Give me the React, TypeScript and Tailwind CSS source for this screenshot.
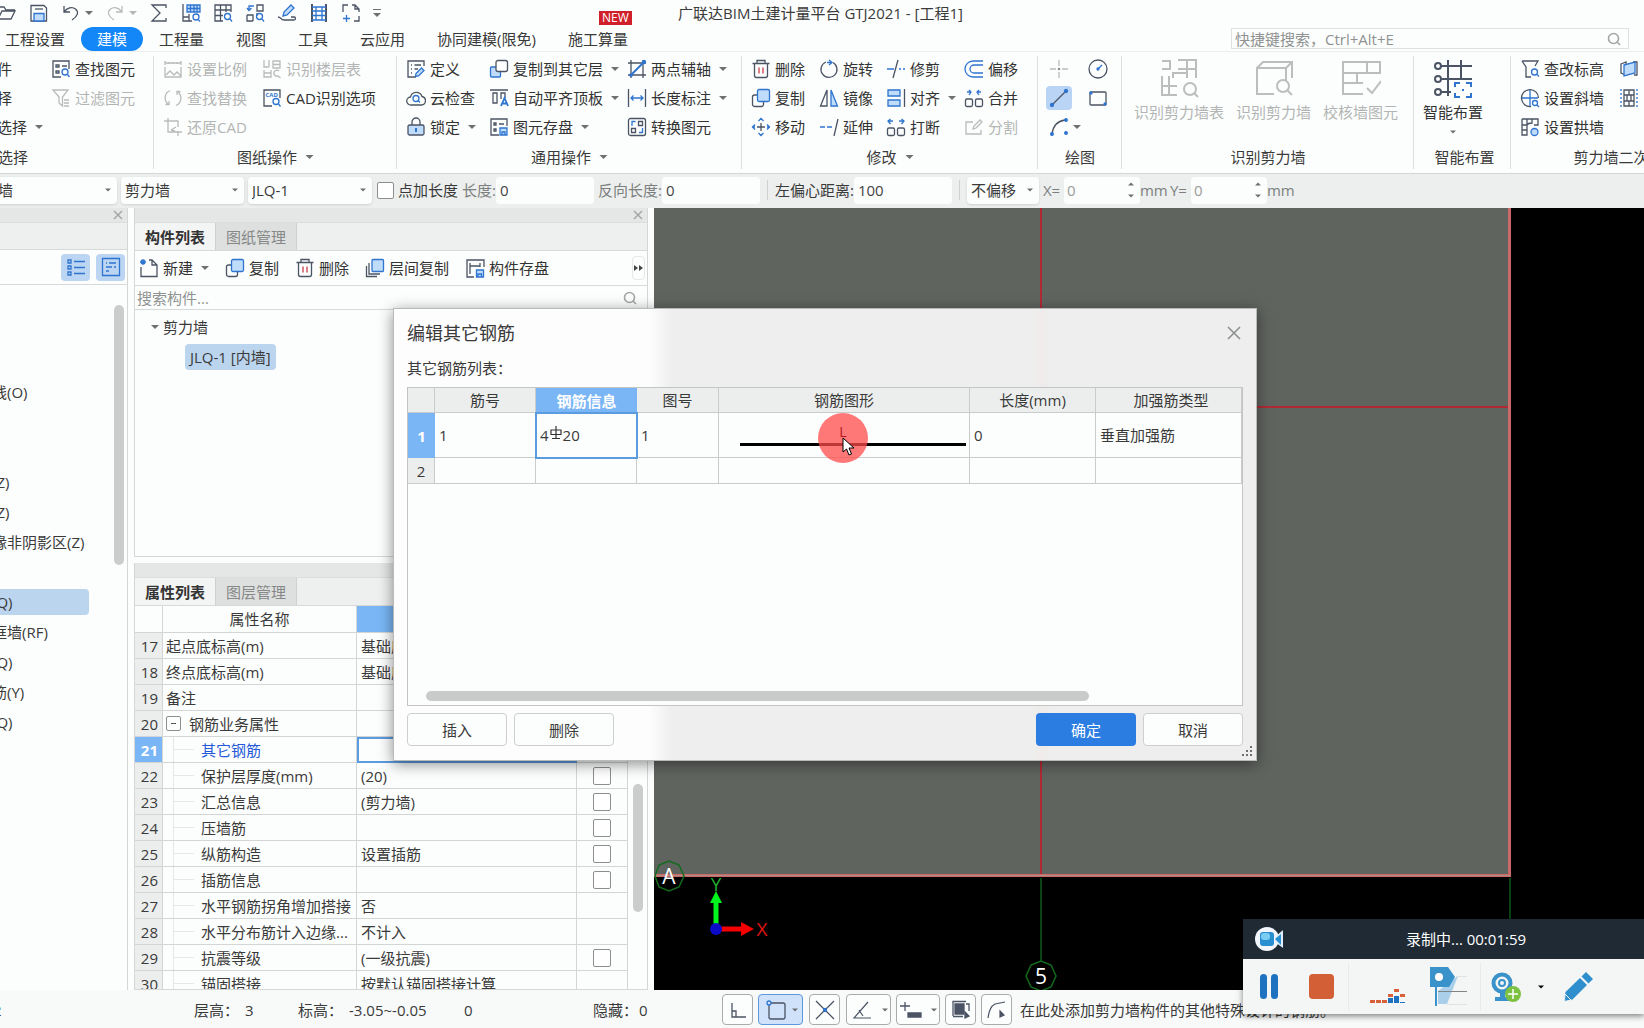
import type { ReactNode } from 'react';
import clsx from 'clsx';

const D = '#4b5464';
const B = '#2f74cf';
const L = '#bfdcfb';
const G = '#b9bbba';

// 20x20 line icons
const ICONS: Record<string, ReactNode> = {
  folder: (
    <path d="M1 16V4h6l2 3h9M1 16h13l4-8H5L1 16" stroke={D} />
  ),
  save: (
    <>
      <path d="M2 2.500h13l2.500 2.500v13H2z" stroke={D} />
      <path d="M5 10.500h10V18H5z" fill={L} stroke={B} />
      <path d="M6 6h8" stroke={D} />
    </>
  ),
  undo: <path d="M3 3v6h6M3 9C6 5 11 3 14.500 6s2.500 7-3.500 11" stroke={D} />,
  redo: <path d="M17 3v6h-6M17 9C14 5 9 3 5.500 6S3 13 9 17" stroke={G} />,
  sigma: <path d="M17 5V2H3l8 8-8 8h14v-3" stroke={D} />,
  tableFind: (
    <>
      <path d="M2 1v17h9M2 14h6V11M8 14v4" stroke={D} />
      <path d="M6 2h13v7H6zM6 5.500h13M9.500 2v7M13 2v7M16 2v7" stroke={B} fill={L} />
      <circle cx="15" cy="14" r="3" stroke={B} />
      <path d="M17 16.500l2 2" stroke={B} />
    </>
  ),
  gridFind: (
    <>
      <path d="M18 9V2H2v16h8M2 7h16M2 12.500h8M7.500 2v16M13 2v7" stroke={D} />
      <circle cx="14.500" cy="13.500" r="3" stroke={B} />
      <path d="M17 16l2 2.500" stroke={B} />
    </>
  ),
  swapFind: (
    <>
      <path d="M12 2h6v6h-6zM2 12v6h6M2 12h6v6M12 10v3" stroke={D} />
      <path d="M9 3H4v4M2 5l2 2.500L6.500 5" stroke={B} />
      <circle cx="14.500" cy="13.500" r="3" stroke={B} />
      <path d="M17 16l2 2.500" stroke={B} />
    </>
  ),
  eraser: (
    <>
      <path d="M1 14c3 0 3 3 6 3h10c2 0 2-3 0-3h-3" stroke={D} />
      <path d="M6 13l1-4 7-7 3 3-7 7z" stroke={B} fill={L} />
    </>
  ),
  film: (
    <>
      <path d="M3 1v18M17 1v18" stroke={D} strokeWidth="2" />
      <path d="M3 4h14M3 8h14M3 12.500h14M3 17h14M7 4v13M13 4v13" stroke={B} />
    </>
  ),
  exportBox: (
    <>
      <path d="M2 9V2h5M11 2h3l4 4v3M18 13v5h-5M14 2v4h4" stroke={D} />
      <path d="M5.500 12v7M2 15.500h7" stroke={B} />
    </>
  ),
  findElement: (
    <>
      <path d="M18 10V2H2v16h8M5 6h3v2H5zM5 12h3v2H5zM11 7h5" stroke={D} />
      <circle cx="14" cy="13" r="3" stroke={B} />
      <path d="M16.500 15.500l2 2.500" stroke={B} />
    </>
  ),
  filter: <path d="M2 2h15l-5.500 7v9l-3.500-3V9zM13 12h5M13 15h5M13 18h5" stroke={G} />,
  scale: <path d="M2 4h16M2 2v4M6 3v2M10 3v2M14 3v2M18 2v4M2 8v10h16V8M3 16l4-4 4 4 3-3 4 4" stroke={G} />,
  findSwap: <path d="M7 2.500A8 8 0 0 0 5 16M2.500 16.500H6V13M13 17.500A8 8 0 0 0 15 4M17.500 3.500H14V7" stroke={G} />,
  restore: <path d="M5 1v14h14M1 4h14v6M15 14v5M8 13l5-3M8 13l4 1" stroke={G} />,
  floorTable: (
    <path d="M2 1v7h5M7 1v7M11 2h7v7h-7zM11 5.500h7M2 11v7h7v-7M2 14h7M17 12a3 3 0 1 0-1 5l2.500 2" stroke={G} />
  ),
  cad: (
    <>
      <path d="M18 10V2H2v16h8" stroke={D} />
      <text x="3.500" y="9" fontSize="6" fontWeight="700" fill={B} stroke="none">CAD</text>
      <circle cx="14" cy="13.500" r="3" stroke={B} />
      <path d="M16.500 16l2 2.500" stroke={B} />
    </>
  ),
  define: (
    <>
      <path d="M18 7V2H2v16h8M5 6h1M8.500 6H15M5 10h1M8.500 10H12M5 14h1" stroke={D} />
      <path d="M9.500 17.500l.500-3L15.500 9l2.500 2.500-5.500 5.500z" stroke={B} fill={L} />
    </>
  ),
  cloud: (
    <>
      <path d="M5 17a4 4 0 0 1-.500-8A6 6 0 0 1 16 8.500 4.300 4.300 0 0 1 15.500 17z" stroke={D} />
      <circle cx="10" cy="10.500" r="3" stroke={B} />
      <path d="M12 12.500l2 2" stroke={B} />
    </>
  ),
  lock: (
    <>
      <path d="M6 8V5a4 4 0 0 1 8 0v3" stroke={D} />
      <rect x="2" y="8" width="16" height="10" rx="1.500" stroke={D} fill={L} />
      <path d="M10 11v4" stroke={B} strokeWidth="2" />
    </>
  ),
  copyFloor: (
    <>
      <rect x="1.500" y="8" width="10" height="10" rx="1" stroke={B} fill={L} />
      <rect x="7" y="1.500" width="11.500" height="11" rx="2" stroke={D} fill="#fff" />
    </>
  ),
  alignTop: (
    <>
      <path d="M1 2h18M4 5h4v10H4zM12 11V5h4v5" stroke={D} />
      <path d="M12 18l3.500-8 3.500 8M13 15.500h5" stroke={B} strokeWidth="1.800" />
    </>
  ),
  storeElement: (
    <>
      <path d="M18 9V2H2v16h8M5 6h2v2H5zM10 7h5M5 12h2v2H5z" stroke={D} />
      <path d="M11 11h7v7h-7zM13 18v-3h3v3" stroke={B} fill={L} />
    </>
  ),
  axis: (
    <>
      <path d="M4 1v18M16 1v18M1 4h18M1 16h18" stroke={D} />
      <path d="M4 16L16 4" stroke={B} strokeWidth="2" />
      <circle cx="4" cy="16" r="1.200" fill={B} stroke={B} />
      <circle cx="17" cy="3" r="1.500" fill={B} stroke={B} />
    </>
  ),
  dimension: (
    <>
      <path d="M1.500 1v18M18.500 1v18" stroke={D} />
      <path d="M4 10h12M6.500 7.500L4 10l2.500 2.500M13.500 7.500L16 10l-2.500 2.500" stroke={B} />
    </>
  ),
  convert: (
    <>
      <rect x="1.500" y="1.500" width="17" height="17" rx="2" stroke={D} />
      <path d="M11.500 4.500h4v4h-4zM4.500 11.500h4v4h-4z" stroke={D} />
      <path d="M8.500 4.500H5V9M12 15.500h3.500V11" stroke={B} />
    </>
  ),
  trash: (
    <>
      <path d="M1.500 4.500h17M6 4V1.500h8V4M3.500 5v11.500a2 2 0 0 0 2 2h9a2 2 0 0 0 2-2V5" stroke={D} />
      <path d="M8 8.500v6M12 8.500v6" stroke="#cf3b4c" />
    </>
  ),
  copy: (
    <>
      <rect x="1.500" y="7" width="11" height="11.500" rx="2" stroke={D} />
      <rect x="6.500" y="1.500" width="12" height="12" rx="1.500" stroke={B} fill={L} />
    </>
  ),
  move: (
    <>
      <path d="M10 6v8M6 10h8" stroke={D} />
      <path d="M10 1v2M10 17v2M1 10h3M16 10h3M7.500 4L10 1.500 12.500 4M7.500 16l2.500 2.500 2.500-2.500M4 7.500L1.500 10 4 12.500M16 7.500l2.500 2.500-2.500 2.500" stroke={B} />
    </>
  ),
  rotate: (
    <>
      <path d="M7 3a8 8 0 1 0 7 .500" stroke={D} />
      <path d="M8 3.500h4.500M10 1l3 2.500L10 6" stroke={B} />
    </>
  ),
  mirror: (
    <>
      <path d="M8 2v16H1.500z" stroke={D} />
      <path d="M12 2v16h6.500z" stroke={B} fill={L} />
    </>
  ),
  extend: (
    <>
      <path d="M1 10h5M8 10h5" stroke={B} />
      <path d="M19 2l-4 17" stroke={D} />
    </>
  ),
  trim: (
    <>
      <path d="M1 10h7M13 10h2M17 10h2" stroke={B} />
      <path d="M12 1L7 19" stroke={D} />
    </>
  ),
  align: (
    <>
      <path d="M2 2h12v6H2zM2 12h12v6H2z" stroke={B} fill={L} />
      <path d="M18.500 1v18" stroke={D} />
    </>
  ),
  breakUp: (
    <>
      <rect x="1.500" y="11" width="7" height="7.500" rx="1.500" stroke={D} />
      <rect x="11.500" y="11" width="7" height="7.500" rx="1.500" stroke={D} />
      <path d="M2 4h5M4.500 2L2 4l2.500 3M13 4h5M15.500 2L18 4l-2.500 3" stroke={B} />
    </>
  ),
  offset: <path d="M19 2H9a7.800 7.800 0 0 0 0 16h10M19 6H10a4 4 0 0 0 0 8h9" stroke={B} />,
  merge: (
    <>
      <rect x="1.500" y="11" width="7" height="7.500" rx="1.500" stroke={D} />
      <rect x="11.500" y="11" width="7" height="7.500" rx="1.500" stroke={D} />
      <path d="M3 4h4M5 2l2 2-2 3M17 4h-4M15 2l-2 2 2 3" stroke={B} />
    </>
  ),
  split: <path d="M9 5H2v12h15v-4M9 12l1-3 6-6 2 2-6 6z" stroke={G} />,
  point: (
    <>
      <path d="M10 1v6M10 13v6M1 10h6M13 10h6" stroke={G} />
      <path d="M9.500 9.500h1v1h-1z" stroke="#8d9090" />
    </>
  ),
  circle: (
    <>
      <circle cx="10" cy="10" r="9" stroke={D} />
      <path d="M10 10l4-4" stroke={B} />
      <circle cx="10" cy="10" r="1" fill={B} stroke={B} />
    </>
  ),
  line: (
    <>
      <path d="M3 17L17 3" stroke={D} />
      <circle cx="3" cy="17" r="1.500" fill={B} stroke={B} />
      <circle cx="17" cy="3" r="1.500" fill={B} stroke={B} />
    </>
  ),
  rect: (
    <>
      <rect x="2" y="4" width="16" height="13" rx="1" stroke={D} />
      <circle cx="3" cy="5" r="1" fill={B} stroke={B} />
      <circle cx="17" cy="16" r="1" fill={B} stroke={B} />
    </>
  ),
  arc: (
    <>
      <path d="M3 17C4 9 9 4 16 3" stroke={D} />
      <circle cx="3" cy="17" r="1.300" fill={B} stroke={B} />
      <circle cx="17" cy="3" r="1.300" fill={B} stroke={B} />
      <circle cx="17" cy="16" r="1.300" fill={B} stroke={B} />
    </>
  ),
  elevation: (
    <>
      <path d="M2 2h16l-3 5M2 2l4 6v10h5" stroke={D} />
      <circle cx="14.500" cy="13" r="3" stroke={B} />
      <path d="M17 15.500l2 2" stroke={B} />
    </>
  ),
  slant: (
    <>
      <path d="M11 18.500A8.500 8.500 0 1 1 18.500 10" stroke={D} />
      <path d="M10 2v16M2 10h16" stroke={B} />
      <circle cx="15" cy="15" r="2.500" stroke={B} fill="#fff" />
      <path d="M17 17l2 2" stroke={B} />
    </>
  ),
  arch: (
    <>
      <path d="M2 2h16v6h-4M2 2v16h5V8c1-2 3-2 5-2V2M2 8h5M2 13h5M7 2v6" stroke={D} />
      <circle cx="14.500" cy="15" r="3.500" stroke={B} fill={L} />
    </>
  ),
  layers: (
    <>
      <path d="M2 5l5-2v13l-5-2zM14 3h4v13h-3" stroke={D} />
      <path d="M5 6l11-3v11L5 17z" stroke={B} fill={L} />
    </>
  ),
  grout: (
    <>
      <path d="M2 1v18M18 1v18" stroke={B} strokeDasharray="2 2" />
      <path d="M5 2h10v16H5zM5 7h10M5 13h10M10 2v5M8 7v6M12 7v6M10 13v5" stroke={D} />
    </>
  ),
  newFile: (
    <>
      <path d="M2 9v9.500h16V7l-5-5h-3M13 2v5h5" stroke={D} />
      <path d="M4 1v6M1 4h6M2 2l4 4M6 2L2 6" stroke={B} />
    </>
  ),
  layerCopy: (
    <>
      <path d="M1.500 8v10.500H12M4 5v11h11" stroke={D} />
      <rect x="7" y="1.500" width="11.500" height="12" rx="1" stroke={B} fill={L} />
    </>
  ),
  storeMember: (
    <>
      <path d="M19 9V2H2v17h7M5 5v11M5 8h10M15 5v4" stroke={D} />
      <path d="M11.500 12h7v7h-7zM13 19v-3h3.500v3" stroke={B} fill={L} />
    </>
  ),
  list: (
    <path d="M2 3h3v3H2zM2 9h3v3H2zM2 15h3v3H2zM8 4.500h11M8 10.500h11M8 16.500h11" stroke={B} />
  ),
  card: <path d="M1.500 1.500h17v17h-17zM5 6h1M8 6h7M5 10h6M13 10h2M5 14h3" stroke={B} />,
};

function Icon({ name, className = 'size-5' }: { name: string; className?: string }) {
  return (
    <svg viewBox="0 0 20 20" fill="none" strokeWidth="1.300" className={clsx('shrink-0', className)} aria-hidden>
      {ICONS[name]}
    </svg>
  );
}

function Caret({ className = '' }: { className?: string }) {
  return (
    <svg viewBox="0 0 8 4" className={clsx('h-1 w-2 shrink-0 fill-[#6d7071]', className)} aria-hidden>
      <path d="M0 0h8L4 4z" />
    </svg>
  );
}

interface ToolProps {
  icon?: string;
  label: string;
  caret?: boolean;
  off?: boolean;
}

function Tool({ icon, label, caret, off }: ToolProps) {
  return (
    <button
      disabled={off}
      className={clsx('flex items-center gap-1 whitespace-nowrap', off ? 'text-[#b3b5b4]' : 'text-[#333]')}
    >
      {icon && <Icon name={icon} />}
      <span>{label}</span>
      {caret && <Caret className="ml-1" />}
    </button>
  );
}

interface GroupProps {
  title: string;
  caret?: boolean;
  className?: string;
  titleClass?: string;
  children: ReactNode;
}

function Group({ title, caret, className, titleClass, children }: GroupProps) {
  return (
    <section className={clsx('relative flex shrink-0 flex-col pt-[2px]', className)}>
      <div className="flex h-[87px]">{children}</div>
      <div className={clsx('flex h-[31px] items-center justify-center gap-2 whitespace-nowrap', titleClass)}>
        {title}
        {caret && <Caret className="w-[9px]" />}
      </div>
      <i className="absolute top-1 right-0 bottom-1 w-px bg-[#dddfde]" />
    </section>
  );
}

const GRID = 'grid grid-flow-col grid-rows-[repeat(3,29px)]';

function TitleBar() {
  return (
    <header className="shrink-0">
      <div className="flex h-[25px] items-center">
        <div className="-ml-[3px] flex flex-1 items-center gap-3">
          <Icon name="folder" />
          <Icon name="save" />
          <span className="flex items-center gap-1">
            <Icon name="undo" />
            <Caret />
          </span>
          <span className="flex items-center gap-1">
            <Icon name="redo" />
            <Caret className="opacity-50" />
          </span>
          {['sigma', 'tableFind', 'gridFind', 'swapFind', 'eraser', 'film', 'exportBox'].map((n) => (
            <Icon key={n} name={n} />
          ))}
          <span className="flex flex-col items-center gap-[3px]">
            <i className="h-px w-2 bg-[#6d7071]" />
            <Caret />
          </span>
        </div>
        <h1>广联达BIM土建计量平台 GTJ2021 - [工程1]</h1>
        <div className="flex-1" />
      </div>
      <nav className="flex h-[26px] items-end">
        <div className="-ml-[11px] flex flex-1">
          {['工程设置', '建模', '工程量', '视图', '工具', '云应用', '协同建模(限免)', '施工算量'].map((m) => (
            <button
              key={m}
              className={clsx(
                'relative h-6 rounded-full px-4 whitespace-nowrap',
                m === '建模' && 'bg-[#1487f8] text-white',
              )}
            >
              {m}
              {m === '施工算量' && (
                <span className="absolute -top-4 right-3 h-[14px] w-[33px] bg-[#d0212b] text-xs leading-[14px] text-white">
                  NEW
                </span>
              )}
            </button>
          ))}
        </div>
        <label className="mr-[15px] mb-[2px] flex h-[21px] w-[398px] items-center border border-[#dfe1e0] px-[3px]">
          <input
            aria-label="快捷键搜索"
            placeholder="快捷键搜索，Ctrl+Alt+E"
            className="min-w-0 flex-1 outline-none placeholder:text-[#8f9291]"
          />
          <SearchIcon />
        </label>
      </nav>
    </header>
  );
}

function SearchIcon() {
  return (
    <svg viewBox="0 0 14 14" fill="none" className="mr-1 size-[14px] shrink-0 stroke-[#a3a6a5]" strokeWidth="1.600">
      <circle cx="6.500" cy="6.500" r="5" />
      <path d="M10 10l3 3" />
    </svg>
  );
}

function BigTool({ label, off, children }: { label: string; off?: boolean; children: ReactNode }) {
  return (
    <button
      disabled={off}
      className={clsx('flex flex-col items-center pt-1 whitespace-nowrap', off ? 'text-[#b3b5b4]' : 'text-[#333]')}
    >
      <svg viewBox="0 0 40 40" fill="none" strokeWidth="2" stroke="#bcbebd" className="size-10">
        {children}
      </svg>
      <span className="mt-1">{label}</span>
    </button>
  );
}

function Ribbon() {
  return (
    <div className="flex h-[123px] shrink-0 overflow-hidden border-y border-t-[#eceeed] border-b-[#d5d7d6]">
      <Group title="选择" className="w-[154px]" titleClass="mr-[128px]">
        <div className={clsx(GRID, '-ml-[48px] w-[99px]')}>
          <Tool label="拾取构件" />
          <Tool label="批量选择" />
          <Tool label="按属性选择" caret />
        </div>
        <div className={GRID}>
          <Tool icon="findElement" label="查找图元" />
          <Tool icon="filter" label="过滤图元" off />
        </div>
      </Group>
      <Group title="图纸操作" caret className="w-[243px]">
        <div className={clsx(GRID, 'grid-cols-[99px_1fr] pl-[9px]')}>
          <Tool icon="scale" label="设置比例" off />
          <Tool icon="findSwap" label="查找替换" off />
          <Tool icon="restore" label="还原CAD" off />
          <Tool icon="floorTable" label="识别楼层表" off />
          <Tool icon="cad" label="CAD识别选项" />
        </div>
      </Group>
      <Group title="通用操作" caret className="w-[345px]">
        <div className={clsx(GRID, 'grid-cols-[83px_138px_1fr] pl-[9px]')}>
          <Tool icon="define" label="定义" />
          <Tool icon="cloud" label="云检查" />
          <Tool icon="lock" label="锁定" caret />
          <Tool icon="copyFloor" label="复制到其它层" caret />
          <Tool icon="alignTop" label="自动平齐顶板" caret />
          <Tool icon="storeElement" label="图元存盘" caret />
          <Tool icon="axis" label="两点辅轴" caret />
          <Tool icon="dimension" label="长度标注" caret />
          <Tool icon="convert" label="转换图元" />
        </div>
      </Group>
      <Group title="修改" caret className="w-[296px]">
        <div className={clsx(GRID, 'grid-cols-[68px_67px_78px_1fr] pl-[9px]')}>
          <Tool icon="trash" label="删除" />
          <Tool icon="copy" label="复制" />
          <Tool icon="move" label="移动" />
          <Tool icon="rotate" label="旋转" />
          <Tool icon="mirror" label="镜像" />
          <Tool icon="extend" label="延伸" />
          <Tool icon="trim" label="修剪" />
          <Tool icon="align" label="对齐" caret />
          <Tool icon="breakUp" label="打断" />
          <Tool icon="offset" label="偏移" />
          <Tool icon="merge" label="合并" />
          <Tool icon="split" label="分割" off />
        </div>
      </Group>
      <Group title="绘图" className="w-[84px]">
        <div className={clsx(GRID, 'grid-cols-[39px_39px] items-center pl-2')}>
          <button aria-label="点" className="w-[26px] pl-[3px]"><Icon name="point" /></button>
          <button aria-label="直线" className="h-6 w-[26px] rounded-sm bg-[#b9d4f5] pl-[3px]"><Icon name="line" /></button>
          <button aria-label="弧线" className="flex items-center gap-1 pl-[3px]">
            <Icon name="arc" />
            <Caret />
          </button>
          <button aria-label="圆" className="pl-[3px]"><Icon name="circle" /></button>
          <button aria-label="矩形" className="pl-[3px]"><Icon name="rect" /></button>
        </div>
      </Group>
      <Group title="识别剪力墙" className="w-[292px]">
        <div className="flex items-start gap-3 pl-3">
          <BigTool label="识别剪力墙表" off>
            <path d="M3 3h8v8H3M19 2h18v18M19 11h18M28 2v18M3 18v19h15M3 28h15M10 18v19M14 20V15h14" />
            <circle cx="31" cy="31" r="6" />
            <path d="M35 35l4 4" />
          </BigTool>
          <BigTool label="识别剪力墙" off>
            <path d="M20 36H3V10l6-6h29v16M3 10h29v12M32 10l6-6" />
            <circle cx="29" cy="28" r="6" />
            <path d="M33 32l5 5" />
          </BigTool>
          <BigTool label="校核墙图元" off>
            <path d="M22 36H2V4h37v11H2M26 4v11M16 15v10M2 25h20M26 30l5 5 9-12" />
          </BigTool>
        </div>
      </Group>
      <Group title="智能布置" className="w-[97px]" titleClass="pl-1">
        <div className="flex flex-col items-center pl-[9px]">
          <BigTool label="智能布置">
            <path stroke={D} d="M15 2v36M28 2v20M6 8h33M6 21h33M6 34h12" />
            <g stroke={D} fill="#fff">
              <circle cx="5" cy="8" r="3" />
              <circle cx="5" cy="21" r="3" />
              <circle cx="5" cy="34" r="3" />
            </g>
            <path stroke={B} d="M22 29v-4h5M33 25h5v4M38 35v4h-5M27 39h-5v-4M29 32h2" />
          </BigTool>
          <Caret className="mt-2 w-[6px]" />
        </div>
      </Group>
      <Group title="剪力墙二次编辑" className="w-[230px]">
        <div className={clsx(GRID, 'grid-cols-[99px_1fr] pl-[9px]')}>
          <Tool icon="elevation" label="查改标高" />
          <Tool icon="slant" label="设置斜墙" />
          <Tool icon="arch" label="设置拱墙" />
          <button aria-label="墙分层"><Icon name="layers" /></button>
          <button aria-label="灌浆"><Icon name="grout" /></button>
        </div>
      </Group>
    </div>
  );
}

function Picker({ label, value, className }: { label: string; value: string; className: string }) {
  return (
    <span className={clsx('relative flex h-[27px] shrink-0 items-center', className)}>
      <select aria-label={label} className="h-full w-full appearance-none rounded bg-[#fcfefd] px-1 shadow-sm outline-none">
        <option>{value}</option>
      </select>
      <Caret className="pointer-events-none absolute right-[6px] w-[6px]" />
    </span>
  );
}

function Field({ label, value, dim, className }: { label: string; value: string; dim?: boolean; className?: string }) {
  return (
    <label className={clsx('flex shrink-0 items-center whitespace-nowrap', dim && 'text-[#7c7f7e]', className)}>
      {label}
      <input defaultValue={value} className="h-[27px] w-[98px] rounded bg-[#fcfefd] px-1 text-[#444] outline-none" />
    </label>
  );
}

function Stepper({ label }: { label: string }) {
  return (
    <label className="flex shrink-0 items-center text-[#7c7f7e]">
      <span className="w-[21px]">{label}</span>
      <span className="flex h-[27px] w-[76px] items-center rounded bg-[#fcfefd] pr-[6px] pl-[3px]">
        <input defaultValue="0" className="w-full min-w-0 text-[#9a9c9b] outline-none" />
        <span className="flex flex-col gap-2">
          <Caret className="w-[6px] rotate-180" />
          <Caret className="w-[6px]" />
        </span>
      </span>
      <span className="w-[30px]">mm</span>
    </label>
  );
}

function OptionBar() {
  return (
    <div className="flex h-[34px] shrink-0 items-center overflow-hidden bg-[#ecefee] pb-[2px]">
      <Picker label="构件大类" value="墙" className="-ml-[6px] w-[123px]" />
      <Picker label="构件类型" value="剪力墙" className="ml-1 w-[123px]" />
      <Picker label="构件" value="JLQ-1" className="ml-1 w-[124px]" />
      <label className="ml-[5px] flex shrink-0 items-center gap-1 whitespace-nowrap">
        <input type="checkbox" className="size-[17px] appearance-none rounded-xs border border-[#8c8f8e] bg-white" />
        点加长度
      </label>
      <Field label="长度:" value="0" dim className="ml-1" />
      <Field label="反向长度:" value="0" dim className="ml-1" />
      <i className="mx-[7px] h-5 w-px bg-[#cfd1d0]" />
      <Field label="左偏心距离:" value="100" />
      <i className="mx-[7px] h-5 w-px bg-[#cfd1d0]" />
      <Picker label="偏移方式" value="不偏移" className="mr-1 w-[72px]" />
      <Stepper label="X=" />
      <Stepper label="Y=" />
    </div>
  );
}

function PanelHead({ close }: { close?: boolean }) {
  return (
    <div className="flex h-[15px] shrink-0 items-center justify-end border-b border-[#dcdedd] bg-[#e4e7e6] pr-1">
      {close && (
        <button aria-label="关闭面板">
          <svg viewBox="0 0 10 10" className="size-[10px] stroke-[#a0a3a2]" strokeWidth="1.300">
            <path d="M1 1l8 8M9 1L1 9" />
          </svg>
        </button>
      )}
    </div>
  );
}

function Tabs({ items }: { items: string[] }) {
  return (
    <div className="flex h-[28px] shrink-0 border-b border-[#d8dad9] bg-[#eef0ef]">
      {items.map((t, i) => (
        <button
          key={t}
          className={clsx(
            'border-r border-[#cfd1d0] px-[10px]',
            i === 0 ? 'bg-[#f3f5f4] font-bold text-[#333]' : 'bg-[#dee0df] text-[#858887]',
          )}
        >
          {t}
        </button>
      ))}
    </div>
  );
}

const NAV_ITEMS = [
  '辅助轴线(O)', '', '', '构造柱(Z)', '砌体柱(Z)', '约束边缘非阴影区(Z)', '',
  '剪力墙(Q)', '人防门框墙(RF)', '砌体墙(Q)', '砌体加筋(Y)', '保温墙(Q)',
];

function NavPanel() {
  return (
    <aside className="flex w-[128px] shrink-0 flex-col border-r border-[#d5d7d6]">
      <PanelHead close />
      <div className="h-[27px] shrink-0 border-b border-[#d8dad9] bg-[#eef0ef]" />
      <div className="flex h-[35px] shrink-0 items-center justify-end gap-[6px] border-b border-[#d8dad9] pr-[2px]">
        <button aria-label="列表" className="flex h-[27px] w-[29px] items-center justify-center rounded bg-[#bcd5f3]">
          <Icon name="list" />
        </button>
        <button aria-label="卡片" className="flex h-[27px] w-[29px] items-center justify-center rounded bg-[#bcd5f3]">
          <Icon name="card" />
        </button>
      </div>
      <div className="flex min-h-0 flex-1 justify-between overflow-hidden">
        <ul className="-ml-[53px] w-[142px] shrink-0 pt-[92px]">
          {NAV_ITEMS.map((t, i) => (
            <li key={i} className="flex h-[30px] items-center whitespace-nowrap">
              <span className={clsx('leading-[26px]', i === 7 && 'w-full rounded bg-[#bcd5ee]')}>{t}</span>
            </li>
          ))}
        </ul>
        <div className="mt-5 mr-[3px] h-[260px] w-[10px] rounded-full bg-[#cbcdcc]" />
      </div>
    </aside>
  );
}

function ComponentPanel() {
  return (
    <section className="flex h-[349px] shrink-0 flex-col border border-t-0 border-[#d5d7d6]">
      <PanelHead close />
      <Tabs items={['构件列表', '图纸管理']} />
      <div className="flex h-[35px] shrink-0 items-center gap-4 border-b border-[#d8dad9] pl-1">
        <Tool icon="newFile" label="新建" caret />
        <Tool icon="copy" label="复制" />
        <Tool icon="trash" label="删除" />
        <Tool icon="layerCopy" label="层间复制" />
        <Tool icon="storeMember" label="构件存盘" />
        <button aria-label="更多" className="mr-[2px] ml-auto flex h-6 w-[13px] items-center justify-center rounded-sm border border-[#e6e8e7]">
          <svg viewBox="0 0 10 6" className="h-[6px] w-[10px] shrink-0 fill-[#444]">
            <path d="M0 0l4 3-4 3zM5 0l4 3-4 3z" />
          </svg>
        </button>
      </div>
      <label className="flex h-6 shrink-0 items-center border-b border-[#d8dad9] px-[2px]">
        <input aria-label="搜索构件" placeholder="搜索构件..." className="flex-1 outline-none placeholder:text-[#8f9291]" />
        <span className="mr-1"><SearchIcon /></span>
      </label>
      <div className="pt-[2px]">
        <div className="flex h-[30px] items-center gap-1 pl-4">
          <Caret />
          剪力墙
        </div>
        <div className="flex h-[30px] items-center pl-[50px]">
          <span className="rounded bg-[#bcd5ee] px-[5px] leading-[26px]">JLQ-1 [内墙]</span>
        </div>
      </div>
    </section>
  );
}

// [name, value, has checkbox]
const PROPS: [string, string, boolean][] = [
  ['起点底标高(m)', '基础底标高', false],
  ['终点底标高(m)', '基础底标高', false],
  ['备注', '', false],
  ['钢筋业务属性', '', false],
  ['其它钢筋', '', false],
  ['保护层厚度(mm)', '(20)', true],
  ['汇总信息', '(剪力墙)', true],
  ['压墙筋', '', true],
  ['纵筋构造', '设置插筋', true],
  ['插筋信息', '', true],
  ['水平钢筋拐角增加搭接', '否', false],
  ['水平分布筋计入边缘...', '不计入', false],
  ['抗震等级', '(一级抗震)', true],
  ['锚固搭接', '按默认锚固搭接计算', false],
];

function PropName({ row, name }: { row: number; name: string }) {
  if (row < 20) return <span className="pl-[3px]">{name}</span>;
  if (row === 20)
    return (
      <span className="flex items-center gap-2 pl-[3px]">
        <button aria-label="折叠" className="flex size-[15px] items-center justify-center rounded-xs border border-[#8c8f8e]">
          <i className="h-px w-[5px] bg-[#555]" />
        </button>
        {name}
      </span>
    );
  return (
    <span className="ml-[10px] flex h-[25px] items-center border-l border-[#e6e8e7]">
      <i className="mr-[7px] h-px w-5 bg-[#e6e8e7]" />
      <span className={clsx(row === 21 && 'text-[#2459d8]')}>{name}</span>
    </span>
  );
}

function PropertyPanel() {
  const cell = 'h-[26px] border-r border-b border-[#d3d6d5] p-0';
  return (
    <section className="flex min-h-0 flex-1 flex-col overflow-hidden border border-t-0 border-[#d5d7d6]">
      <PanelHead />
      <Tabs items={['属性列表', '图层管理']} />
      <div className="flex min-h-0 flex-1 overflow-hidden">
        <table className="h-fit w-[493px] table-fixed border-separate border-spacing-0 whitespace-nowrap">
          <thead>
            <tr className="h-[27px]">
              <th className={clsx(cell, 'w-[28px]')} />
              <th className={clsx(cell, 'w-[194px] font-normal')}>属性名称</th>
              <th className={clsx(cell, 'w-[220px] bg-[#7ab6f5] text-white')}>属性值</th>
              <th className={clsx(cell, 'font-normal')}>附加</th>
            </tr>
          </thead>
          <tbody>
            {PROPS.map(([name, value, check], i) => {
              const row = i + 17;
              const on = row === 21;
              return (
                <tr key={row}>
                  <td className={clsx(cell, 'pr-1 text-right', on ? 'bg-[#7ab6f5] font-bold text-white' : 'bg-[#eceeed]')}>
                    {row}
                  </td>
                  <td className={clsx(cell, 'overflow-hidden')}>
                    <PropName row={row} name={name} />
                  </td>
                  <td className={clsx(cell, 'pl-1', on && 'outline-2 -outline-offset-2 outline-[#5b9be0]')}>{value}</td>
                  <td className={cell}>
                    {check && (
                      <input
                        type="checkbox"
                        aria-label={name}
                        className="mx-auto block size-[18px] appearance-none rounded-xs border border-[#8c8f8e] bg-white"
                      />
                    )}
                  </td>
                </tr>
              );
            })}
          </tbody>
        </table>
        <div className="mt-[178px] ml-[5px] h-[128px] w-[10px] rounded-full bg-[#cbcdcc]" />
      </div>
    </section>
  );
}

function Canvas() {
  return (
    <main className="min-w-0 flex-1 overflow-hidden bg-black">
      <svg width="990" height="782" fill="none" className="max-w-none">
        <rect width="856" height="668" fill="#60645f" />
        <path d="M387 0v667M0 199h856" stroke="#b02a35" strokeWidth="2" />
        <path d="M387 670v83M856 670v112" stroke="#0b5a1c" strokeWidth="1.500" />
        <path d="M0 667.500h857M855.500 0v669" stroke="#cb6868" strokeWidth="3" />
        <path d="M0 667.500h856" stroke="#b08c86" strokeWidth="1" />
        <g transform="translate(1 0)">
          <g stroke="#136b1c" strokeWidth="1.500">
            <path d="M24 657l5 11-5 11-10 4-10-4-4-11 4-11 10-4z" />
            <path d="M396 757l5 11-5 11-10 4-10-4-5-11 5-11 10-4z" />
          </g>
          <g textAnchor="middle" fontSize="21" fill="#fff">
            <text x="14" y="676">A</text>
            <text x="386" y="776">5</text>
          </g>
          <path d="M61 718v-24" stroke="#00f51e" strokeWidth="5" />
          <path d="M55 695l6-12 6 12z" fill="#00f51e" />
          <path d="M63 721h24" stroke="#f40000" strokeWidth="5" />
          <path d="M86 714l13 7-13 7z" fill="#f40000" />
          <circle cx="61" cy="721" r="6" fill="#0a0ac8" />
          <text x="61" y="683" textAnchor="middle" fontSize="19" fill="#1fae2c">Y</text>
          <text x="107" y="728" textAnchor="middle" fontSize="19" fill="#e01414">X</text>
        </g>
      </svg>
    </main>
  );
}

function Dialog() {
  const th = 'h-[25px] border-r border-b border-[#c9cccb] bg-[#eceeed] p-0 font-normal';
  const td = 'border-r border-b border-[#c9cccb] px-1 py-0';
  const btn = 'h-[33px] w-[100px] rounded border border-[#cdcfce] bg-[#fcfefd]';
  return (
    <div
      role="dialog"
      aria-label="编辑其它钢筋"
      className="absolute top-[308px] left-[393px] flex h-[453px] w-[864px] flex-col border border-[#b9bbba] bg-[linear-gradient(90deg,#fdfdfd_255px,#edeeed_278px,#edeeed_640px,#efebea_648px,#edeeed_656px)] px-[13px] shadow-[0_3px_14px_rgba(0,0,0,0.45)]"
    >
      <div className="flex h-12 shrink-0 items-center justify-between">
        <h2 className="text-lg">编辑其它钢筋</h2>
        <button aria-label="关闭" className="mr-[2px]">
          <svg viewBox="0 0 14 14" className="size-[14px] stroke-[#8b8e8d]" strokeWidth="1.500">
            <path d="M1 1l12 12M13 1L1 13" />
          </svg>
        </button>
      </div>
      <p className="mb-2 h-[22px] shrink-0 leading-[22px]">其它钢筋列表：</p>
      <div className="flex h-[319px] shrink-0 flex-col border border-[#c2c5c4] bg-[#fcfefd]">
        <table className="w-full table-fixed border-separate border-spacing-0 whitespace-nowrap">
          <thead>
            <tr>
              <th className={clsx(th, 'w-[27px]')} />
              <th className={clsx(th, 'w-[101px]')}>筋号</th>
              <th className="w-[101px] bg-[#7ab6f5] p-0 font-bold text-white">钢筋信息</th>
              <th className={clsx(th, 'w-[82px]')}>图号</th>
              <th className={clsx(th, 'w-[251px]')}>钢筋图形</th>
              <th className={clsx(th, 'w-[126px]')}>长度(mm)</th>
              <th className={clsx(th, 'pl-[5px]')}>加强筋类型</th>
            </tr>
          </thead>
          <tbody>
            <tr className="h-[45px]">
              <td className="bg-[#7ab6f5] p-0 text-center font-bold text-white">1</td>
              <td className={td}>1</td>
              <td className={clsx(td, 'outline-2 -outline-offset-1 outline-[#5b9be0]')}>
                <span className="flex items-center">
                  4
                  <svg viewBox="0 0 14 14" fill="none" stroke="#333" strokeWidth="1.200" className="mb-1 h-[14px] w-[14px]" aria-label="三级钢">
                    <path d="M7 0v12.500M3 12.500h8M2 4v4.500h10V4zM7 2v10" />
                  </svg>
                  20
                </span>
              </td>
              <td className={td}>1</td>
              <td className={clsx(td, 'relative')}>
                <i className="absolute top-[30px] right-[3px] left-[21px] h-[3px] bg-black" />
                <span className="absolute top-0 left-[99px] flex size-[50px] items-center justify-center rounded-full bg-[#ff4b4b]/75 pb-3 text-sm text-[#b3161f]">
                  L
                </span>
                <svg viewBox="0 0 13 19" className="absolute top-6 left-[123px] h-[19px] w-[13px]">
                  <path d="M1 1v14l3.500-3 2.500 6 2.500-1-2.500-6h5z" fill="#fff" stroke="#000" />
                </svg>
              </td>
              <td className={td}>0</td>
              <td className={td}>垂直加强筋</td>
            </tr>
            <tr className="h-[26px]">
              <td className={clsx(td, 'bg-[#eceeed] text-center')}>2</td>
              <td className={td} />
              <td className={td} />
              <td className={td} />
              <td className={td} />
              <td className={td} />
              <td className={td} />
            </tr>
          </tbody>
        </table>
        <div className="mt-auto mb-1 ml-[18px] h-[10px] w-[663px] rounded-full bg-[#c9cbca]" />
      </div>
      <div className="mt-[7px] flex gap-[7px]">
        <button className={btn}>插入</button>
        <button className={btn}>删除</button>
        <button className="ml-auto h-[33px] w-[100px] rounded bg-[#2b7de1] text-white">确定</button>
        <button className={btn}>取消</button>
      </div>
      <svg viewBox="0 0 11 11" className="absolute right-[3px] bottom-[3px] size-[11px] fill-[#6d7071]">
        <path d="M8 0h2v2H8zM8 4h2v2H8zM8 8h2v2H8zM4 4h2v2H4zM4 8h2v2H4zM0 8h2v2H0z" />
      </svg>
    </div>
  );
}

function StatusBar() {
  const box = 'flex h-[31px] shrink-0 items-center justify-center gap-2 rounded border border-[#a9acab] bg-[#fcfefd]';
  const ico = 'size-6 shrink-0';
  return (
    <footer className="flex h-[38px] shrink-0 items-center overflow-hidden bg-[#f8faf9] pt-px whitespace-nowrap">
      <span className="-ml-[7px] w-[201px] shrink-0">2</span>
      <span className="w-[104px] shrink-0">层高：<span className="ml-[6px]">3</span></span>
      <span className="w-[166px] shrink-0">标高：<span className="ml-[6px]">-3.05~-0.05</span></span>
      <span className="w-[129px] shrink-0">0</span>
      <span className="w-[129px] shrink-0">隐藏：<span className="ml-px">0</span></span>
      <div className="flex shrink-0 gap-[5px]">
        <button aria-label="正交" className={clsx(box, 'w-[31px]')}>
          <svg viewBox="0 0 24 24" fill="none" stroke={D} strokeWidth="1.300" className={ico}>
            <path d="M6 5v14h14M6 13h4v6" />
          </svg>
        </button>
        <button aria-label="捕捉" className="flex h-[31px] w-[45px] items-center justify-center gap-1 rounded border border-[#5d97dd] bg-[#cfe2fa]">
          <svg viewBox="0 0 24 24" fill="none" stroke={D} strokeWidth="1.300" className={ico}>
            <path d="M7 5h12a2 2 0 0 1 2 2v12a2 2 0 0 1-2 2H7a2 2 0 0 1-2-2V7" />
            <circle cx="5" cy="5" r="2" stroke={B} />
          </svg>
          <Caret className="w-[6px]" />
        </button>
        <button aria-label="交点" className={clsx(box, 'ml-px w-[31px]')}>
          <svg viewBox="0 0 24 24" fill="none" stroke={D} strokeWidth="1.300" className={ico}>
            <path d="M3 3l18 18M21 3L3 21" />
            <circle cx="12" cy="12" r="1.500" fill={B} stroke={B} />
          </svg>
        </button>
        <button aria-label="角度" className={clsx(box, 'ml-px w-[45px]')}>
          <svg viewBox="0 0 24 24" fill="none" stroke={D} strokeWidth="1.200" className={ico}>
            <path d="M18 4L4 20h17M9 12l4 6" />
          </svg>
          <Caret className="w-[6px]" />
        </button>
        <button aria-label="动态输入" className={clsx(box, 'w-[44px]')}>
          <svg viewBox="0 0 24 24" fill="none" stroke={D} strokeWidth="1.300" className={ico}>
            <path d="M6 4v9M1 8h10" />
            <path d="M9 15h13v4H9z" fill={D} />
          </svg>
          <Caret className="w-[6px]" />
        </button>
        <button aria-label="选择过滤" className={clsx(box, 'w-[31px]')}>
          <svg viewBox="0 0 24 24" fill="none" stroke={D} strokeWidth="1.300" className={ico}>
            <path d="M6 6h9v10H6z" fill={D} />
            <path d="M4 18V3.500h13M17 6h3v7M4 18.500h10" />
            <path d="M16 14l4 4-4 2z" fill={D} />
          </svg>
        </button>
        <button aria-label="折线" className={clsx(box, 'w-[31px]')}>
          <svg viewBox="0 0 24 24" fill="none" stroke={D} strokeWidth="1.200" className={ico}>
            <path d="M3 20C4 12 6 8 10 6l10-2" />
            <path d="M15 13l4 4-4 2z" fill={D} />
          </svg>
        </button>
      </div>
      <span className="ml-2">在此处添加剪力墙构件的其他特殊设计的钢筋。</span>
    </footer>
  );
}

function Recorder() {
  return (
    <div className="absolute right-0 bottom-[14px] w-[401px] bg-[#f4f5f5] shadow-[0_2px_6px_rgba(0,0,0,0.5)]">
      <div className="flex h-10 items-center bg-[#1f2a35] pl-3 text-white">
        <svg viewBox="0 0 28 24" className="h-6 w-7">
          <circle cx="12" cy="12" r="12" fill="#f2f5fb" />
          <path d="M20 10l8-7v18l-8-6z" fill="#dfeefa" />
          <rect x="5" y="5" width="14" height="14" rx="3" fill="#2a8fd0" />
          <rect x="6" y="6" width="9" height="7" rx="3" fill="#79cdf3" />
          <path d="M20 12l6-5v11z" fill="#2a8fd0" />
        </svg>
        <span className="ml-[123px]">录制中... 00:01:59</span>
      </div>
      <div className="flex h-[55px] items-center">
        <button aria-label="暂停" className="ml-[17px] flex gap-1">
          <i className="h-[25px] w-[7px] rounded-sm bg-[#1f72c0]" />
          <i className="h-[25px] w-[7px] rounded-sm bg-[#1f72c0]" />
        </button>
        <button aria-label="停止" className="ml-[31px] size-[25px] rounded bg-[#d25f35]" />
        <i className="ml-[14px] h-12 w-px bg-[#e6ebea]" />
        <svg viewBox="0 0 36 16" className="mt-[18px] ml-[21px] h-4 w-9">
          <path fill="#d8613a" d="M0 12h5v3H0zM6 12h5v3H6zM12 12h5v3h-5zM18 6h5v3h-5zM24 1h5v3h-5zM30 6h5v3h-5z" />
          <path fill="#1f72c0" d="M18 10h5v5h-5zM24 8h5v7h-5zM30 14h5v1h-5z" />
        </svg>
        <svg viewBox="0 0 38 40" className="ml-[24px] h-10 w-[38px]">
          <path d="M8 24L28 9 17 37H8z" fill="#a9cfea" />
          <path d="M0 0h18l7 10-6 10H0z" fill="#3a92cb" />
          <circle cx="9" cy="10" r="4" fill="#fff" />
          <path d="M5 20h2v19H5z" fill="#3a92cb" />
          <path d="M8 24.500h29" stroke="#7f8584" />
          <path d="M26 9.500h11M17 37.500h20" stroke="#dfe3e2" />
        </svg>
        <i className="ml-[12px] h-12 w-px bg-[#e6ebea]" />
        <button aria-label="摄像头" className="ml-[10px]">
          <svg viewBox="0 0 30 32" className="h-8 w-[30px]">
            <circle cx="11" cy="12" r="8.500" fill="none" stroke="#3a92cb" strokeWidth="4" />
            <circle cx="11" cy="12" r="3" fill="none" stroke="#3a92cb" strokeWidth="2" />
            <path d="M9 22h5v4h5v4H4v-4h5z" fill="#3a92cb" />
            <circle cx="22" cy="23" r="8" fill="#7cc142" />
            <path d="M22 18v10M17 23h10" stroke="#fff" strokeWidth="1.500" />
          </svg>
        </button>
        <Caret className="ml-[17px] w-[6px] fill-black" />
        <button aria-label="画笔" className="ml-[19px]">
          <svg viewBox="0 0 30 30" className="size-[30px]" fill="#2f8fcd">
            <path d="M1 29l1.500-9L17 6l7 7L9.500 27.500z" />
            <path d="M18.500 4.500L23 0l7 7-4.500 4.500z" />
            <path d="M2 22l6 6-6.500 1.500z" stroke="#f4f5f5" />
          </svg>
        </button>
      </div>
    </div>
  );
}

export default function App() {
  return (
    <div className="relative flex h-screen flex-col overflow-hidden bg-[#fcfefd] font-['Open_Sans','Noto_Sans_CJK_SC',sans-serif] text-[15px] leading-5 text-[#3a3a3a]">
      <TitleBar />
      <Ribbon />
      <OptionBar />
      <div className="flex min-h-0 flex-1 gap-[6px]">
        <NavPanel />
        <div className="flex w-[514px] shrink-0 flex-col gap-[6px]">
          <ComponentPanel />
          <PropertyPanel />
        </div>
        <Canvas />
      </div>
      <StatusBar />
      <Dialog />
      <Recorder />
    </div>
  );
}
